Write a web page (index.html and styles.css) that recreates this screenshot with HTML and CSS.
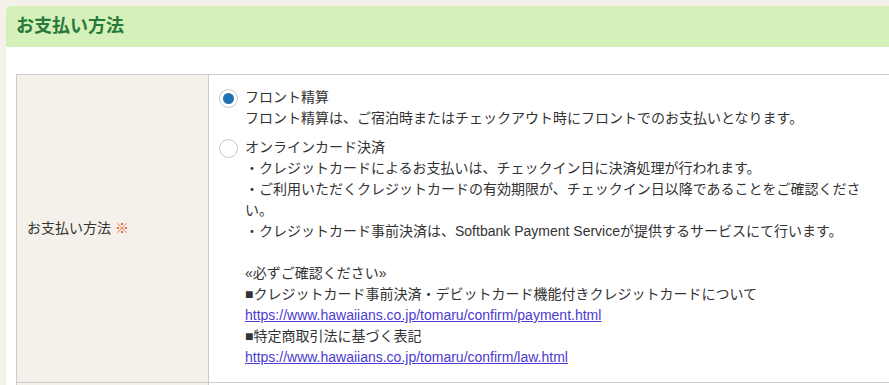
FILE: index.html
```html
<!DOCTYPE html>
<html lang="ja">
<head>
    <meta charset="UTF-8">
    <meta name="viewport" content="width=device-width, initial-scale=1.0">
    <title>お支払い方法</title>
    <link rel="stylesheet" href="styles.css">
</head>
<body>
    <div class="section">
        <h2 class="section-title">お支払い方法</h2>
        <div class="section-body">
            <table class="form-table">
                <tr>
                    <th>お支払い方法 <span class="required">※</span></th>
                    <td>
                        <label class="choice">
                            <input type="radio" name="payment" checked>
                            <span class="choice-text">
                                フロント精算<br>
                                フロント精算は、ご宿泊時またはチェックアウト時にフロントでのお支払いとなります。
                            </span>
                        </label>
                        <label class="choice">
                            <input type="radio" name="payment">
                            <span class="choice-text">
                                オンラインカード決済<br>
                                ・クレジットカードによるお支払いは、チェックイン日に決済処理が行われます。<br>
                                ・ご利用いただくクレジットカードの有効期限が、チェックイン日以降であることをご確認ください。<br>
                                ・クレジットカード事前決済は、Softbank Payment Serviceが提供するサービスにて行います。<br>
                                <br>
                                &laquo;必ずご確認ください&raquo;<br>
                                ■クレジットカード事前決済・デビットカード機能付きクレジットカードについて<br>
                                <a href="#">https://www.hawaiians.co.jp/tomaru/confirm/payment.html</a><br>
                                ■特定商取引法に基づく表記<br>
                                <a href="#">https://www.hawaiians.co.jp/tomaru/confirm/law.html</a>
                            </span>
                        </label>
                    </td>
                </tr>
                <tr>
                    <th>&nbsp;</th>
                    <td>&nbsp;</td>
                </tr>
            </table>
        </div>
    </div>
</body>
</html>
```

FILE: styles.css
```css
* {
    margin: 0;
    padding: 0;
    box-sizing: border-box;
}
html, body {
    overflow: hidden;
}
body {
    background: #f4f0ea;
    font-family: "Liberation Sans", "Noto Sans CJK JP", sans-serif;
    font-size: 14px;
    color: #333;
}
.section {
    width: 960px;
    margin: 6px 0 0 6px;
    background: #fff;
    border-radius: 5px 0 0 0;
    overflow: hidden;
}
.section-title {
    height: 41px;
    padding-left: 10px;
    background: #d6f0b9;
    color: #267a3a;
    font-size: 18px;
    font-weight: bold;
    line-height: 41px;
}
.section-body {
    padding: 27px 10px 0;
}
.form-table {
    width: 100%;
    border-collapse: collapse;
    border: 1px solid #ccc;
}
.form-table th,
.form-table td {
    border: 1px solid #ccc;
    line-height: 21px;
    text-align: left;
}
.form-table th {
    width: 192px;
    padding: 10px;
    background: #f4f0ea;
    font-weight: normal;
}
.form-table td {
    padding: 12px 10px 14px;
}
.required {
    color: #e2561c;
}
.choice {
    display: flex;
    gap: 7px;
    margin-bottom: 8px;
}
.choice:last-child {
    margin-bottom: 0;
}
.choice-text {
    width: 630px;
}
.choice input {
    appearance: none;
    flex: none;
    width: 19px;
    height: 19px;
    margin-top: 2px;
    border: 1px solid #c8c8c8;
    border-radius: 50%;
    background: #fff;
    position: relative;
}
.choice input:checked::after {
    content: "";
    position: absolute;
    left: 3px;
    top: 3px;
    width: 11px;
    height: 11px;
    border-radius: 50%;
    background: #2271b1;
}
.choice a {
    color: #4b3bcf;
}
```
